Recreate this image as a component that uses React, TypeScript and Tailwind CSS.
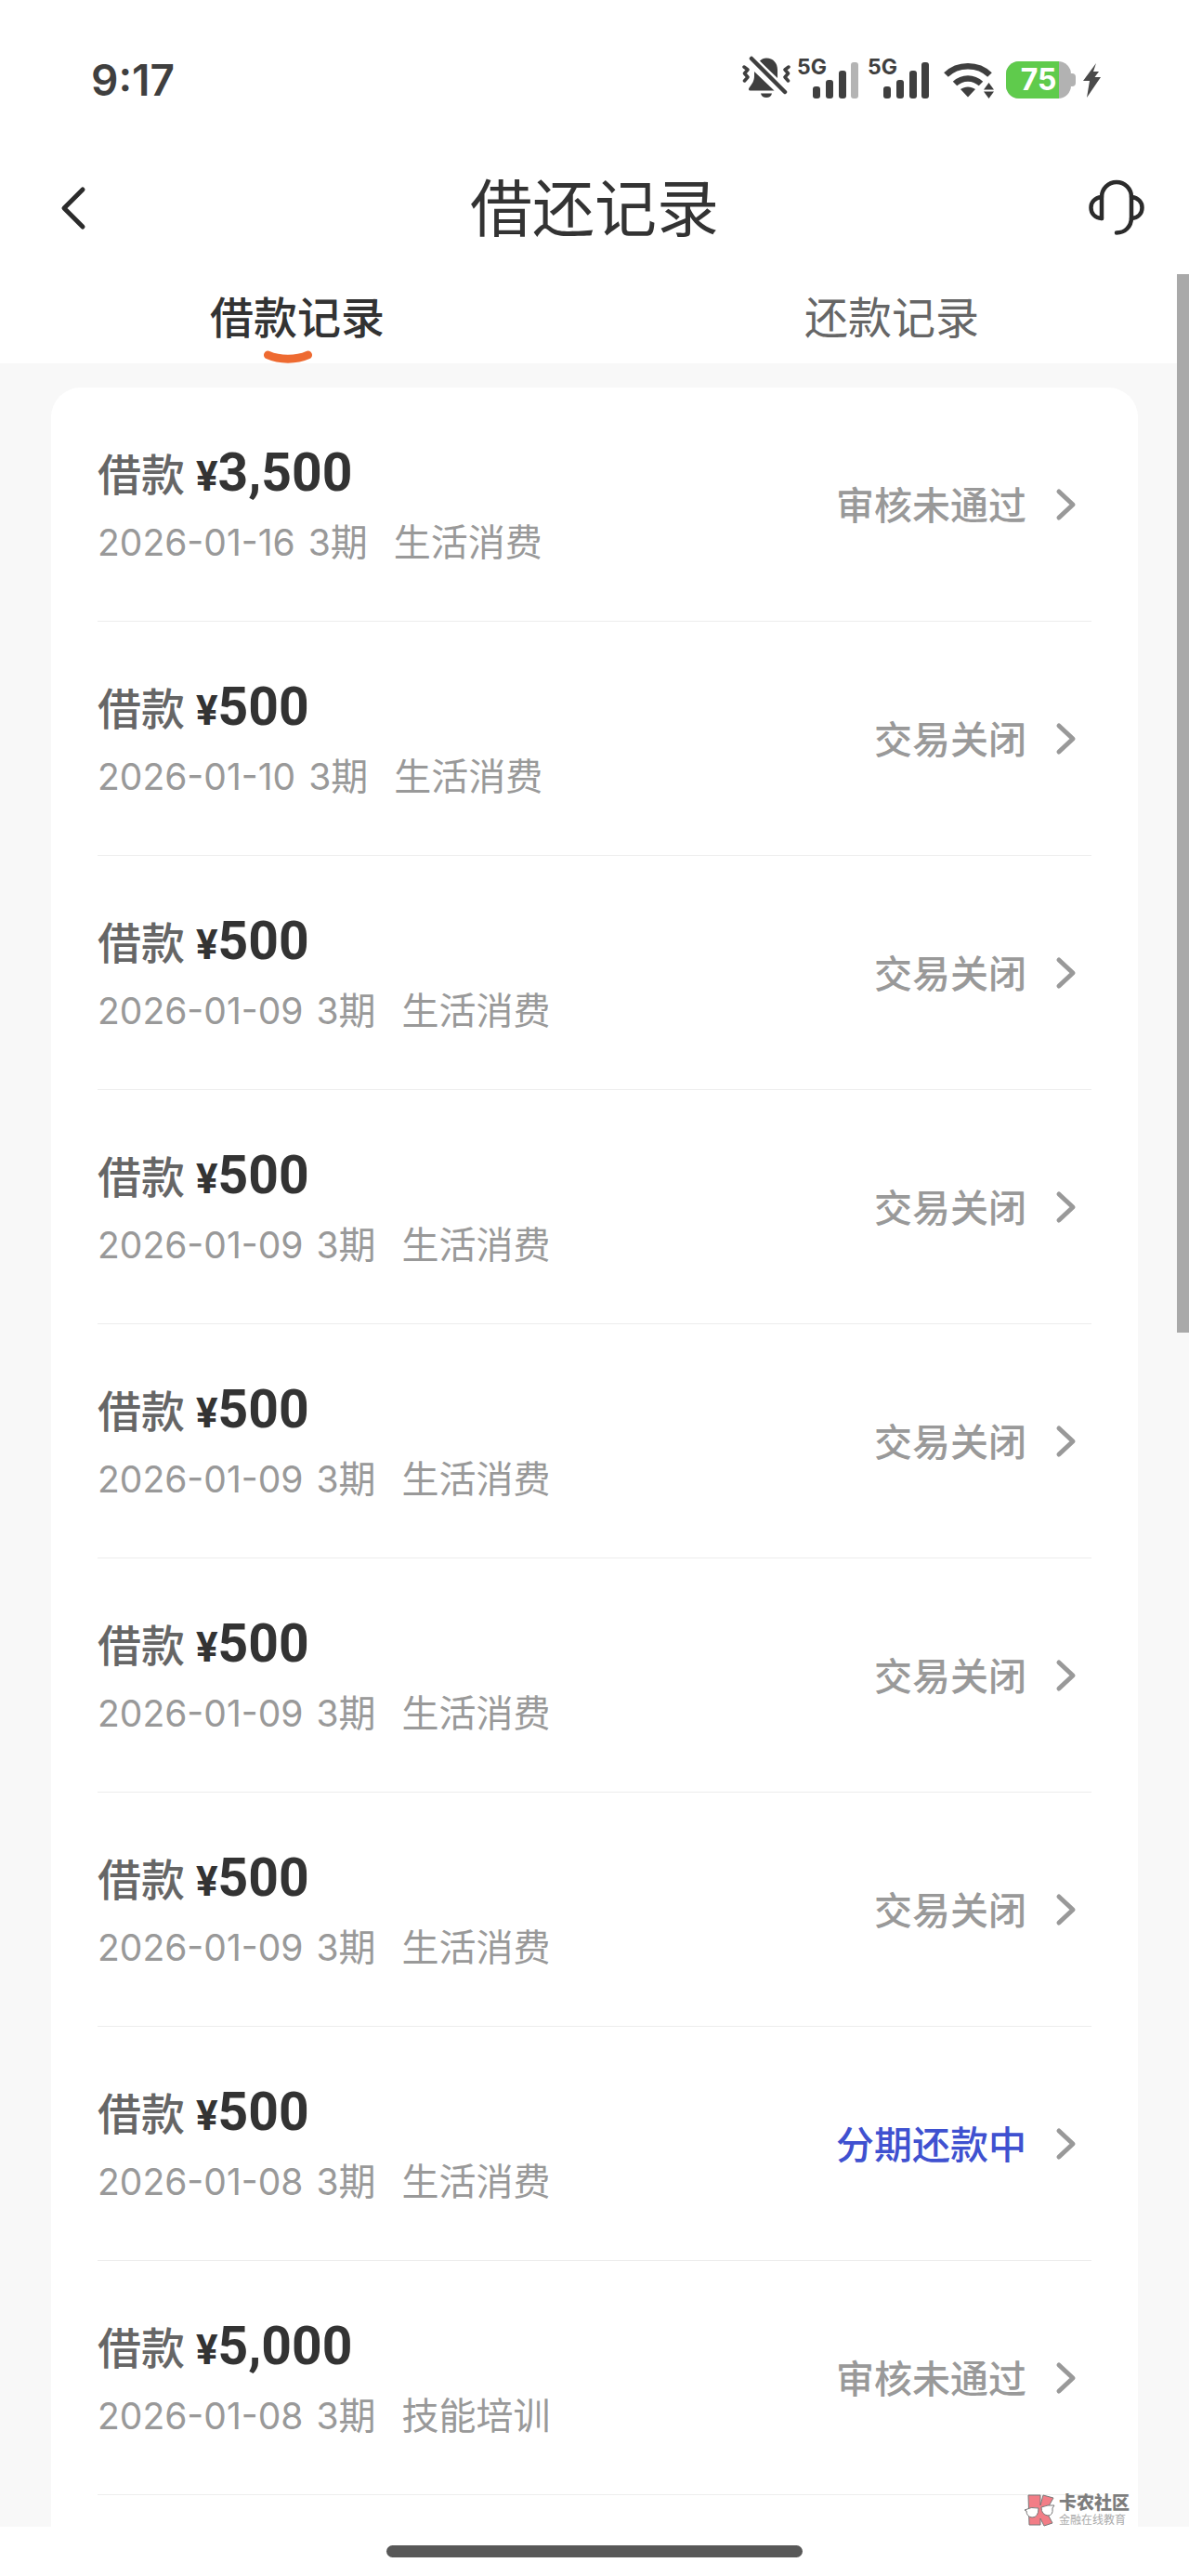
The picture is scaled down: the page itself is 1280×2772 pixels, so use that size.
import type { ReactNode } from "react";

interface LoanRecord {
  id: number;
  amount: string;
  date: string;
  term: string;
  purpose: string;
  status: string;
  active?: boolean;
}

const records: LoanRecord[] = [
  { id: 1, amount: "3,500", date: "2026-01-16", term: "3", purpose: "生活消费", status: "审核未通过" },
  { id: 2, amount: "500", date: "2026-01-10", term: "3", purpose: "生活消费", status: "交易关闭" },
  { id: 3, amount: "500", date: "2026-01-09", term: "3", purpose: "生活消费", status: "交易关闭" },
  { id: 4, amount: "500", date: "2026-01-09", term: "3", purpose: "生活消费", status: "交易关闭" },
  { id: 5, amount: "500", date: "2026-01-09", term: "3", purpose: "生活消费", status: "交易关闭" },
  { id: 6, amount: "500", date: "2026-01-09", term: "3", purpose: "生活消费", status: "交易关闭" },
  { id: 7, amount: "500", date: "2026-01-09", term: "3", purpose: "生活消费", status: "交易关闭" },
  { id: 8, amount: "500", date: "2026-01-08", term: "3", purpose: "生活消费", status: "分期还款中", active: true },
  { id: 9, amount: "5,000", date: "2026-01-08", term: "3", purpose: "技能培训", status: "审核未通过" },
];

function MutedBell() {
  return (
    <svg width="52" height="46" viewBox="0 0 52 46" fill="#3f3f3f" aria-hidden="true">
      <path d="M19 5.5C21 3.5 23 2.5 26 2.5C33.5 2.5 38 8 38 15V24L18.5 5.8Z" />
      <path d="M13 17L34.5 37.5H8.5C7 37.5 6.5 36 7.5 34.5C10.5 30.5 13 27 13 22Z" />
      <path d="M20 40.5H32C31.5 43.5 29 45 26 45C23 45 20.5 43.5 20 40.5Z" />
      <path d="M10 3L46 39" stroke="#fff" strokeWidth="9" />
      <path d="M10 3L46 39" stroke="#3f3f3f" strokeWidth="4.5" strokeLinecap="round" />
      <g fill="none" stroke="#3f3f3f" strokeWidth="3.5" strokeLinejoin="round" strokeLinecap="round">
        <path d="M2 12L6 15L2.5 19L6 23L2.5 27" />
        <path d="M50 12L46 15L49.5 19L46 23L49.5 27" />
      </g>
    </svg>
  );
}

function Signal({ weak }: { weak?: boolean }) {
  return (
    <div className="relative h-11 w-[67px]">
      <span className="absolute top-0 left-0 font-['Inter'] text-[23px] leading-5 font-bold">5G</span>
      <svg width="67" height="44" viewBox="0 0 67 44" fill="#3f3f3f" aria-hidden="true">
        <rect x="17" y="31" width="8" height="13" rx="3" />
        <rect x="31" y="24" width="8" height="20" rx="3" />
        <rect x="45" y="14" width="8" height="30" rx="3" />
        <rect x="58" y="5" width="8" height="39" rx="3" fill={weak ? "#b4b4b4" : "#3f3f3f"} />
      </svg>
    </div>
  );
}

function Wifi() {
  return (
    <svg width="54" height="40" viewBox="0 0 54 40" aria-hidden="true">
      <g fill="none" stroke="#3f3f3f" strokeWidth="6.5">
        <path d="M2.5 14.5C15 2 37 2 49.5 14.5" />
        <path d="M12 24C20 16.5 32 16.5 40 24" />
      </g>
      <g fill="#3f3f3f">
        <path d="M18 30C23 26.5 29 26.5 34 30L26 38.5Z" />
        <path d="M48.5 23L54 30.5H43Z" />
        <path d="M48.5 40L54 32.5H43Z" />
      </g>
    </svg>
  );
}

function Battery({ level }: { level: number }) {
  return (
    <div className="flex items-center">
      <div className="relative flex h-10 w-[70px] items-center justify-center overflow-hidden rounded-[14px] bg-[#b2b2b2]">
        <div className="absolute inset-y-0 left-0 bg-[#5fcb4c]" style={{ width: `${level + 6}%` }} />
        <span className="relative font-['Inter'] text-[32px] leading-10 font-bold text-white">{level}</span>
      </div>
      <div className="h-[14px] w-[5px] rounded-r-sm bg-[#b2b2b2]" />
    </div>
  );
}

function StatusBar() {
  return (
    <div className="flex h-[148px] items-start justify-between pt-[60px] pr-[94px] pl-[98px] text-[#3f3f3f]">
      <span className="font-['Inter'] text-[46px] leading-[52px] font-semibold">9:17</span>
      <div className="flex items-end">
        <MutedBell />
        <div className="ml-[7px] flex gap-[9px]">
          <Signal weak />
          <Signal />
        </div>
        <div className="ml-[15px]">
          <Wifi />
        </div>
        <div className="ml-[13px]">
          <Battery level={75} />
        </div>
        <svg className="ml-2" width="20" height="40" viewBox="0 0 20 40" fill="#4a4a4a" aria-hidden="true">
          <path d="M14 2L0 21H7L4 39L19 17H12.5L17 11H11Z" />
        </svg>
      </div>
    </div>
  );
}

function Header() {
  return (
    <header className="flex h-[147px] items-start justify-between px-[46px]">
      <button type="button" aria-label="返回" className="flex h-[152px] w-20 items-center pl-4">
        <svg width="34" height="48" viewBox="0 0 34 48" fill="none" stroke="#2b2b2b" strokeWidth="5" strokeLinecap="round" strokeLinejoin="round">
          <path d="M27 4L7 24L27 44" />
        </svg>
      </button>
      <h1 className="text-[67px] leading-[143px] text-[#333]">借还记录</h1>
      <button type="button" aria-label="联系客服" className="flex h-[152px] w-20 items-center justify-end">
        <svg width="64" height="64" viewBox="0 0 64 64" fill="none" stroke="#2b2b2b" strokeWidth="4.5" strokeLinecap="round" strokeLinejoin="round">
          <path d="M16 43V20A16 16 0 0 1 48 20V42C48 52 41 58.5 32 58.5" />
          <path d="M16 20C8 21 4.5 26 4.5 31.5C4.5 38 9 42.5 16 43" />
          <path d="M48 20C56 21 59.5 26 59.5 31.5C59.5 38 55 42.5 48 43" />
        </svg>
      </button>
    </header>
  );
}

function Tab({ selected, children }: { selected?: boolean; children: ReactNode }) {
  return (
    <button
      type="button"
      role="tab"
      aria-selected={!!selected}
      className={
        selected
          ? "relative flex-1 pb-2 text-[47px] leading-[84px] font-medium text-[#333]"
          : "relative flex-1 pb-2 text-[47px] leading-[84px] text-[#666]"
      }
    >
      {children}
      {selected && (
        <svg className="absolute bottom-0 left-1/2 -ml-9" width="52" height="14" viewBox="0 0 52 14" fill="none" aria-hidden="true">
          <path d="M4.5 5C17 10.5 35 10.5 47.500 5" stroke="#ee6a31" strokeWidth="9" strokeLinecap="round" />
        </svg>
      )}
    </button>
  );
}

function RecordRow({ record }: { record: LoanRecord }) {
  return (
    <li className="border-b border-[#ededed]">
      <a href="#" className="flex items-center justify-between pt-[59px] pr-4 pb-[50px]">
        <div>
          <div className="flex h-[70px] items-baseline leading-[64px]">
            <span className="text-[47px] font-medium text-[#666]">借款</span>
            <span className="ml-3 font-['Roboto'] text-[44px] font-bold text-[#333]">¥</span>
            <span className="font-['Roboto'] text-[57px] font-bold text-[#333]">{record.amount}</span>
          </div>
          <p className="flex h-[72px] items-baseline text-[40px] leading-[70px] text-[#999]">
            <span className="font-['Inter'] text-[39px]">{record.date}</span>
            <span className="ml-[14px] font-['Inter'] text-[39px]">{record.term}</span>
            <span>期</span>
            <span className="ml-7">{record.purpose}</span>
          </p>
        </div>
        <div className="flex items-center gap-[30px] pb-2">
          <span
            className={
              record.active
                ? "pb-1 text-[41px] leading-[60px] font-medium text-[#3f51d0]"
                : "pb-1 text-[41px] leading-[60px] font-medium text-[#999]"
            }
          >
            {record.status}
          </span>
          <svg width="24" height="36" viewBox="0 0 24 36" fill="none" stroke="#999" strokeWidth="5" strokeLinecap="round" strokeLinejoin="round" aria-hidden="true">
            <path d="M5 4L20 18L5 32" />
          </svg>
        </div>
      </a>
    </li>
  );
}

function Watermark() {
  return (
    <div className="absolute right-16 bottom-0 flex items-end gap-1">
      <svg width="34" height="35" viewBox="0 0 34 35" aria-hidden="true">
        <path d="M5 1H18V12L21 1L32 4L24 18L31 31L22 34L18 26V33H6Z" fill="#f27d86" stroke="#777" />
        <path d="M1 17Q8 13 16 15Q16 25 9 25Q3 24 3 18Z" fill="#fff" stroke="#777" />
        <path d="M19 14Q26 11 33 12L31 15Q32 23 26 23Q19 22 19 14Z" fill="#fff" stroke="#777" />
      </svg>
      <div className="flex flex-col">
        <span className="text-[19px] leading-[22px] font-black text-[#7d7d7d]">卡农社区</span>
        <span className="text-[12px] leading-4 text-[#aaa]">金融在线教育</span>
      </div>
    </div>
  );
}

export default function App() {
  return (
    <div className="flex min-h-screen flex-col bg-white font-['Noto_Sans_CJK_SC',sans-serif]">
      <StatusBar />
      <Header />

      <main className="relative flex flex-1 flex-col">
        <div role="tablist" className="flex h-24">
          <Tab selected>借款记录</Tab>
          <Tab>还款记录</Tab>
        </div>

        <div className="flex-1 bg-[#f8f8f8] px-[55px] pt-[26px]">
          <ul className="h-full rounded-t-[32px] bg-white px-[50px] pb-[34px]">
            {records.map((record) => (
              <RecordRow key={record.id} record={record} />
            ))}
          </ul>
        </div>

        {/* Scroll thumb */}
        <div className="absolute top-0 right-0 h-[47%] w-[13px] bg-[#a9a9a9]" />
        <Watermark />
      </main>

      {/* Gesture bar */}
      <div className="flex h-[53px] items-start justify-center pt-5">
        <div className="h-[13px] w-[35%] rounded-full bg-[#585858]" />
      </div>
    </div>
  );
}
